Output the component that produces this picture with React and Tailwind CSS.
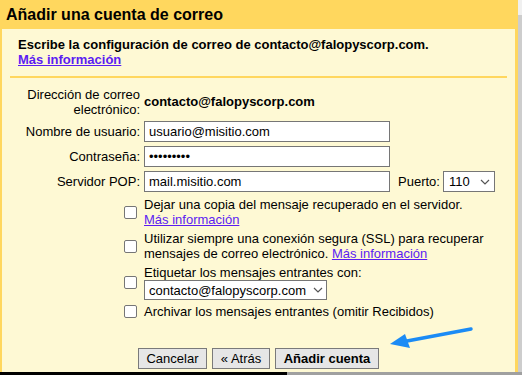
export default function App() {
    const linkCls = 'text-[#5b1cf2] underline';

    const CheckRow = ({ children }) => (
        <div className="flex items-center ml-[122px]">
            <span className="w-[13px] h-[13px] shrink-0 border border-[#767676] rounded-[2px] bg-white" />
            <div className="ml-[7px] leading-[15px] whitespace-nowrap">{children}</div>
        </div>
    );

    const Chevron = () => (
        <svg width="10" height="6" viewBox="0 0 10 6" className="shrink-0">
            <path d="M1 1 L5 5 L9 1" fill="none" stroke="#555" strokeWidth="1.2" />
        </svg>
    );

    return (
        <div className="relative w-[522px] h-[375px] flex flex-col overflow-hidden font-['Liberation_Sans',Arial,sans-serif] text-[13px] text-black">
            <div className="flex flex-1 min-h-0">
                <div className="w-[518px] flex flex-col bg-[#ffd75e]">
                    <div className="h-[29px] flex items-center pl-[6px] text-[16px] font-bold">Añadir una cuenta de correo</div>

                    <div className="flex-1 ml-[2px] mr-[3px] bg-[#fef9d4]">
                        {/* Heading */}
                        <div className="pt-[8px] pl-[16px] leading-[15px] font-bold">
                            <div>Escribe la configuración de correo de contacto@falopyscorp.com.</div>
                            <a className={linkCls}>Más información</a>
                        </div>
                        <div className="h-[2px] mx-[8px] mt-[9px] bg-[#ffd75e]" />

                        {/* Form */}
                        <div className="flex items-center mt-[9px]">
                            <div className="w-[138px] text-right leading-[15px]">Dirección de correo<br />electrónico:</div>
                            <div className="ml-[4px] font-bold">contacto@falopyscorp.com</div>
                        </div>
                        <div className="flex items-center mt-[4px]">
                            <div className="w-[138px] text-right">Nombre de usuario:</div>
                            <div className="ml-[4px] w-[246px] h-[21px] border border-[#767676] bg-white flex items-center px-[4px]">usuario@misitio.com</div>
                        </div>
                        <div className="flex items-center mt-[4px]">
                            <div className="w-[138px] text-right">Contraseña:</div>
                            <div className="ml-[4px] w-[246px] h-[21px] border border-[#767676] bg-white flex items-center px-[4px]">•••••••••</div>
                        </div>
                        <div className="flex items-center mt-[4px]">
                            <div className="w-[138px] text-right">Servidor POP:</div>
                            <div className="ml-[4px] w-[246px] h-[21px] border border-[#767676] bg-white flex items-center px-[4px]">mail.misitio.com</div>
                            <div className="ml-[8px]">Puerto:</div>
                            <div className="ml-[3px] w-[52px] h-[21px] border border-[#767676] bg-white flex items-center justify-between pl-[5px] pr-[4px]">
                                <span>110</span>
                                <Chevron />
                            </div>
                        </div>

                        {/* Options */}
                        <div className="flex flex-col gap-[4px] mt-[5px]">
                            <CheckRow>
                                Dejar una copia del mensaje recuperado en el servidor.<br />
                                <a className={linkCls}>Más información</a>
                            </CheckRow>
                            <CheckRow>
                                Utilizar siempre una conexión segura (SSL) para recuperar<br />
                                mensajes de correo electrónico. <a className={linkCls}>Más información</a>
                            </CheckRow>
                            <CheckRow>
                                Etiquetar los mensajes entrantes con:
                                <div className="w-[183px] h-[20px] border border-[#767676] bg-white flex items-center justify-between pl-[4px] pr-[3px]">
                                    <span>contacto@falopyscorp.com</span>
                                    <Chevron />
                                </div>
                            </CheckRow>
                            <CheckRow>Archivar los mensajes entrantes (omitir Recibidos)</CheckRow>
                        </div>

                        {/* Buttons */}
                        <div className="flex gap-[5px] ml-[136px] mt-[29px]">
                            <button className="w-[69px] h-[21px] border border-[#7a7a7a] bg-[#e6e6e6]">Cancelar</button>
                            <button className="w-[58px] h-[21px] border border-[#7a7a7a] bg-[#e6e6e6]">« Atrás</button>
                            <button className="w-[104px] h-[21px] border border-[#7a7a7a] bg-[#e6e6e6] font-bold">Añadir cuenta</button>
                        </div>
                    </div>
                </div>
                <div className="w-[4px] flex flex-col">
                    <div className="h-[15px] bg-[#f0f0f0]" />
                    <div className="flex-1 bg-[#cdcdcd]" />
                </div>
            </div>
            <div className="h-[3px] flex">
                <div className="w-[287px] bg-black" />
                <div className="flex-1 bg-[#a0a0a0]" />
            </div>

            {/* annotation arrow */}
            <svg className="absolute left-[385px] top-[322px]" width="95" height="30" viewBox="0 0 95 30">
                <line x1="86" y1="7" x2="22" y2="19" stroke="#1b8bf5" strokeWidth="3.5" strokeLinecap="round" />
                <polygon points="5,22 20,12 25,26" fill="#1b8bf5" />
            </svg>
        </div>
    );
}
